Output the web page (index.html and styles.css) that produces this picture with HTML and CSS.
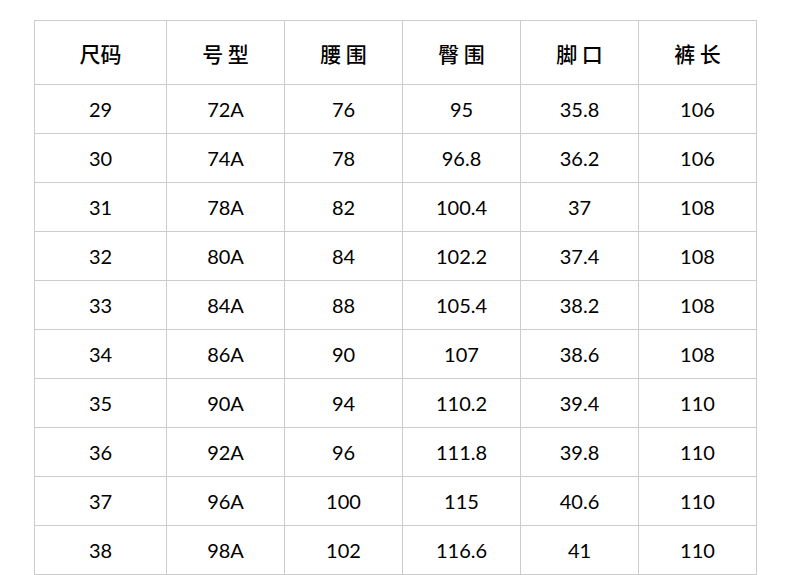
FILE: index.html
```html
<!DOCTYPE html>
<html lang="zh">
<head>
<meta charset="utf-8">
<link rel="stylesheet" href="styles.css">
</head>
<body>
<table class="size-table">
  <colgroup>
    <col class="c1"><col class="c"><col class="c"><col class="c"><col class="c"><col class="c">
  </colgroup>
  <thead>
    <tr><th>尺码</th><th>号 型</th><th>腰 围</th><th>臀 围</th><th>脚 口</th><th>裤 长</th></tr>
  </thead>
  <tbody>
    <tr><td>29</td><td>72A</td><td>76</td><td>95</td><td>35.8</td><td>106</td></tr>
    <tr><td>30</td><td>74A</td><td>78</td><td>96.8</td><td>36.2</td><td>106</td></tr>
    <tr><td>31</td><td>78A</td><td>82</td><td>100.4</td><td>37</td><td>108</td></tr>
    <tr><td>32</td><td>80A</td><td>84</td><td>102.2</td><td>37.4</td><td>108</td></tr>
    <tr><td>33</td><td>84A</td><td>88</td><td>105.4</td><td>38.2</td><td>108</td></tr>
    <tr><td>34</td><td>86A</td><td>90</td><td>107</td><td>38.6</td><td>108</td></tr>
    <tr><td>35</td><td>90A</td><td>94</td><td>110.2</td><td>39.4</td><td>110</td></tr>
    <tr><td>36</td><td>92A</td><td>96</td><td>111.8</td><td>39.8</td><td>110</td></tr>
    <tr><td>37</td><td>96A</td><td>100</td><td>115</td><td>40.6</td><td>110</td></tr>
    <tr><td>38</td><td>98A</td><td>102</td><td>116.6</td><td>41</td><td>110</td></tr>
  </tbody>
</table>
</body>
</html>
```
FILE: styles.css
```css
html, body {
  margin: 0;
  padding: 0;
  background: #fff;
}
body {
  padding: 20px 0 0 34px;
}
.size-table {
  border-collapse: collapse;
  table-layout: fixed;
  width: 721px;
  color: #000;
}
.size-table .c1 { width: 132px; }
.size-table .c { width: 118px; }
.size-table th,
.size-table td {
  border: 1px solid #cccccc;
  text-align: center;
  vertical-align: middle;
  padding: 0;
}
.size-table th {
  height: 63px;
  font-family: "Noto Sans CJK SC", sans-serif;
  font-weight: 500;
  font-size: 21px;
}
.size-table td {
  height: 47px;
  padding-bottom: 1px;
  font-family: "Lato", "Noto Sans", sans-serif;
  font-size: 20px;
  font-weight: 400;
}
```
